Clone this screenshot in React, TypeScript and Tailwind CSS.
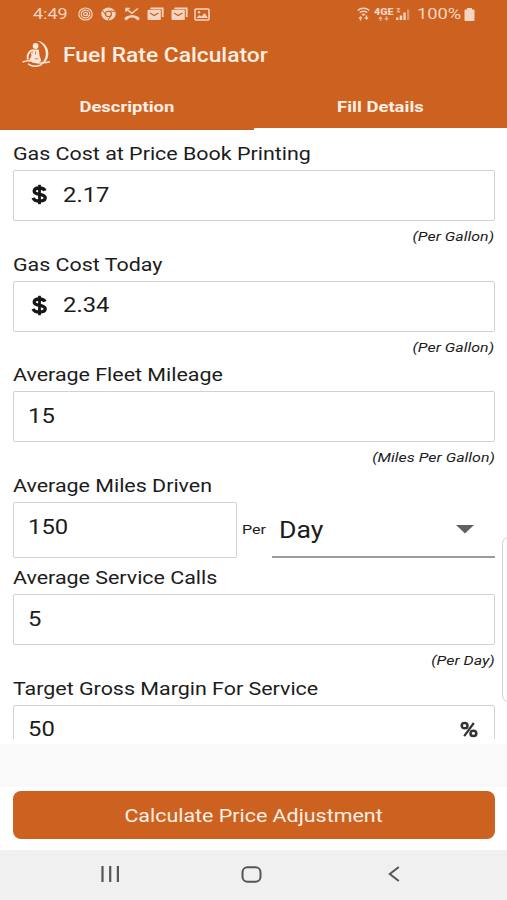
import type { ReactNode } from 'react'

interface FieldProps {
  label: string
  value: string
  prefix?: boolean
  percent?: boolean
  hint?: string
}

// Roboto drawn wider than its default, as on the device's display
function Wide({ children, className = 'origin-left scale-x-[1.19]' }: { children: ReactNode; className?: string }) {
  return <span className={`inline-block whitespace-nowrap ${className}`}>{children}</span>
}

function DollarIcon() {
  return (
    <svg width="17" height="21" viewBox="0 0 17 21" fill="none" stroke="#161616" strokeWidth="3.3">
      <path d="M14 6.6C13 4.4 10.7 4 8.3 4 5.3 4 3.2 5 3.2 7.2c0 4.5 11 2 11 6.6 0 2.3-2.5 3.2-5.6 3.2-3.2 0-5.6-.8-6.6-3.2" />
      <path d="M8.5.8v19.4" strokeWidth="2.8" />
    </svg>
  )
}

function PercentIcon() {
  return (
    <svg width="18" height="17" viewBox="0 0 18 17" fill="none" stroke="#333" strokeWidth="2.5">
      <ellipse cx="4.6" cy="4.7" rx="2.9" ry="2.6" />
      <ellipse cx="13.4" cy="12.4" rx="2.9" ry="2.6" />
      <path d="M13.8 2 4.2 15.2" strokeWidth="2.2" />
    </svg>
  )
}

function LogoIcon() {
  return (
    <svg width="29" height="28" viewBox="0 0 29 28" fill="none" stroke="#fbe6d8">
      <path d="M15 .8C22.500 1.500 26.800 8 26.300 14.500c-.4 5.500-3.500 9-8.300 10.300 3.800-3 5.800-6.500 5.800-11C23.800 8 20.500 3.200 15 .8z" fill="#fbe6d8" stroke="none" />
      <circle cx="13.600" cy="6" r="2.900" fill="#fbe6d8" stroke="none" />
      <path d="M10.800 9.500h6l.7 6 1.800 5.500-3 1.500h-6l-1.800-2.500 1.800-5z" fill="#fbe6d8" stroke="none" />
      <path d="M10.800 10C7 11 4.800 15 5.800 19.500" strokeWidth="2" />
      <path d="M9.500 12.500c1.500 2.500.5 5-1.700 7.500" strokeWidth="1.500" />
      <path d="M.5 22.200c4-2 8.500-1.700 12-.2s8.500 1.300 15.500-.3M6 23.800c4 2.700 9.500 3 14 .5" strokeWidth="1.500" />
      <path d="M13.600 11.500v3M12.800 18.500c1.500.8 2.500.5 3.500-.5" stroke="#cd6220" strokeWidth=".9" />
    </svg>
  )
}

function MailIcon() {
  return (
    <svg width="17" height="14" viewBox="0 0 17 14" fill="none">
      <path d="M3.500 1.300h12.200v8.700" stroke="#f5d4c0" strokeWidth="1.800" />
      <rect x=".5" y="2.800" width="13.300" height="10.200" rx="1" fill="#f5d4c0" />
      <path d="m3 6 4.200 2.600L11.500 6" stroke="#cd6220" strokeWidth="1.300" />
    </svg>
  )
}

function StatusBar() {
  return (
    <div className="flex h-7 items-center text-[#f5d4c0]">
      <div className="ml-[33px] w-[45px] text-[15.500px] leading-7">
        <Wide className="origin-left scale-x-[1.160]">4:49</Wide>
      </div>
      <svg width="15" height="14" viewBox="0 0 15 14" fill="none" stroke="#f5d4c0">
        <ellipse cx="7.500" cy="7" rx="6.700" ry="6" strokeWidth="1.200" />
        <ellipse cx="7.500" cy="7" rx="4.300" ry="3.800" strokeWidth="1.200" />
        <ellipse cx="7.500" cy="7" rx="1.900" ry="1.700" strokeWidth="1.200" />
        <path d="M9.400 5.500c0 3.800 1 4 2 2.700" />
      </svg>
      <svg className="ml-[8px]" width="15" height="14" viewBox="0 0 15 14">
        <ellipse cx="7.500" cy="7" rx="7.200" ry="6.500" fill="#f5d4c0" />
        <ellipse cx="7.500" cy="7" rx="3" ry="2.700" fill="#f5d4c0" stroke="#cd6220" strokeWidth="1.100" />
        <path d="M7.500 4.300h6.300M4.800 8.200 1.800 3.500M10 8.500l-3 4.800" stroke="#cd6220" />
      </svg>
      <svg className="ml-[8px]" width="16" height="14" viewBox="0 0 16 14" fill="none" stroke="#f5d4c0">
        <path d="M2.200 1.800 8 6.300l5.800-4.800M2 4.800V1.500h3.800" strokeWidth="1.500" />
        <path d="M1.800 11.500c3.500-3 9-3 12.400 0" strokeWidth="2.500" />
        <path d="m1 12.300 3-1.800M15 12.300l-3-1.800" strokeWidth="2.800" />
      </svg>
      <div className="ml-[7px] flex gap-[6.500px]">
        <MailIcon />
        <MailIcon />
      </div>
      <svg className="ml-[6px]" width="16" height="13" viewBox="0 0 16 13">
        <rect x="1" y="1" width="14" height="11" rx="1" fill="none" stroke="#f5d4c0" strokeWidth="1.600" />
        <path d="m2.500 10 3-3 2 1.500 3-3.500 3.500 5z" fill="#f5d4c0" />
        <circle cx="5" cy="4.300" r="1.200" fill="#f5d4c0" />
      </svg>

      <svg className="ml-[147px]" width="13" height="14" viewBox="0 0 13 14" fill="none" stroke="#f5d4c0">
        <path d="M.8 3.500c3-3 8.400-3 11.400 0M2.700 5.500c2-1.800 5.600-1.800 7.600 0" strokeWidth="1.500" />
        <path d="M4.300 7.300 6.500 9l2.200-1.700c-1.200-1-3.200-1-4.400 0z" fill="#f5d4c0" stroke="none" />
        <path d="m1.300 11.500 2.200-2.500 2.200 2.500zM7.300 10.500l2.200 2.500 2.200-2.500z" fill="#f5d4c0" stroke="none" />
        <path d="M3.500 11v2.500M9.500 8.500V11" strokeWidth="1.400" />
      </svg>
      <div className="ml-[4px] flex w-[20px] flex-col items-center">
        <span className="scale-x-[1.250] text-[8.500px] leading-[8px] font-black">4GE</span>
        <svg width="11" height="5" viewBox="0 0 11 5" fill="#f5d4c0" opacity=".65">
          <path d="M0 3 2.500 0 5 3H3.200v2H1.800V3zM6 2l2.500 3L11 2H9.200V0H7.800v2z" />
        </svg>
      </div>
      <svg className="ml-[2px]" width="14" height="14" viewBox="0 0 14 14" fill="#f5d4c0">
        <path d="M0 10.500h2.500V13H0zM3.700 8.500h2.500V13H3.700zM7.400 5.500h2.300V13H7.400z" />
        <path d="M11 2.500h2.300V13H11z" opacity=".45" />
        <path d="M.5 1h3.700v1.200H.5zM.5 4.300h3.700v1.200H.5zM1.700 2h1.500v2.500H1.700z" opacity=".7" />
      </svg>
      <div className="ml-[7px] w-[46px] text-[15.500px] leading-7">
        <Wide className="origin-left scale-x-[1.180]">100%</Wide>
      </div>
      <svg className="ml-[1px]" width="11" height="13" viewBox="0 0 11 13" fill="#f5d4c0">
        <path d="M3 0h5v1.500h1.500c.6 0 1 .4 1 1V12c0 .6-.4 1-1 1h-8c-.6 0-1-.4-1-1V2.500c0-.6.4-1 1-1H3z" />
      </svg>
    </div>
  )
}

function Field({ label, value, prefix, percent, hint }: FieldProps) {
  return (
    <div>
      <div className="h-[25px] text-[18px] leading-[25px]">
        <Wide>{label}</Wide>
      </div>
      <div className="mt-[4px] flex h-[51px] items-center rounded-[2px] border-[1.500px] border-[#d2d2d2] pb-[2px]">
        {prefix && (
          <span className="mr-[1px] ml-[17px]">
            <DollarIcon />
          </span>
        )}
        <span className="ml-[14px] flex grow text-[20px] leading-none">
          <Wide>{value}</Wide>
        </span>
        {percent && (
          <span className="mr-[16px]">
            <PercentIcon />
          </span>
        )}
      </div>
      {hint && (
        <div className="flex h-[30.500px] justify-end text-[13.500px] leading-[31px] italic">
          <Wide className="origin-right scale-x-[1.180]">{hint}</Wide>
        </div>
      )}
    </div>
  )
}

export default function App() {
  return (
    <div className="relative flex h-[900px] w-[507px] flex-col overflow-hidden bg-white font-['Roboto',sans-serif] text-[#1c1c1c]">
      <header className="h-[130px] shrink-0 bg-[#cd6220] text-[#fdeee4]">
        <StatusBar />
        <div className="flex h-[54px] items-center">
          <span className="ml-[22px] w-[41px] pb-[3px]">
            <LogoIcon />
          </span>
          <span className="text-[20px] font-medium">
            <Wide className="origin-left scale-x-[1.140]">Fuel Rate Calculator</Wide>
          </span>
        </div>
        <div className="flex h-12 text-center text-[15.500px] leading-[50px] font-bold">
          <div className="w-[254px]">
            <Wide className="origin-center scale-x-[1.190]">Description</Wide>
          </div>
          <div className="flex-1 border-b-2 border-white">
            <Wide className="origin-center scale-x-[1.190]">Fill Details</Wide>
          </div>
        </div>
      </header>

      <main className="h-[609px] shrink-0 overflow-hidden px-[12.500px] pt-[11px]">
        <Field label="Gas Cost at Price Book Printing" value="2.17" prefix hint="(Per Gallon)" />
        <Field label="Gas Cost Today" value="2.34" prefix hint="(Per Gallon)" />
        <Field label="Average Fleet Mileage" value="15" hint="(Miles Per Gallon)" />

        {/* Miles driven with its period selector */}
        <div className="h-[92.500px]">
          <div className="h-[25px] text-[18px] leading-[25px]">
            <Wide>Average Miles Driven</Wide>
          </div>
          <div className="mt-[4px] flex h-[56px]">
            <div className="w-[224px] rounded-[2px] border-[1.500px] border-[#d2d2d2] pt-[12px] pl-[14px] text-[20px] leading-6">
              <Wide>150</Wide>
            </div>
            <div className="w-[35px] pl-[5px] text-[13.500px] leading-[55px]">
              <Wide>Per</Wide>
            </div>
            <div className="flex flex-1 items-center border-b-2 border-[#9b9b9b] pl-[7px] text-[23px]">
              <span className="grow pt-[6px]">
                <Wide className="origin-left scale-x-[1.160]">Day</Wide>
              </span>
              <svg className="mt-[2px] mr-[21px]" width="18" height="9" viewBox="0 0 18 9" fill="#606060">
                <path d="M0 0h18L9 8.500z" />
              </svg>
            </div>
          </div>
        </div>

        <Field label="Average Service Calls" value="5" hint="(Per Day)" />
        <Field label="Target Gross Margin For Service" value="50" percent />
      </main>

      {/* Scroll handle at the screen's edge */}
      <div className="absolute top-[537px] -right-[8px] h-[165px] w-[13px] rounded-lg border border-[#d0d0d0] bg-white" />

      <div className="mt-[5px] h-[43px] shrink-0 bg-[#f9f9f9]" />
      <div className="h-[63px] shrink-0 pt-[4px] pr-[12px] pl-[13px]">
        <button className="h-[48px] w-full rounded-lg bg-[#cd6220] text-[18px] text-[#fdeee4]">
          <Wide className="origin-center scale-x-[1.190]">Calculate Price Adjustment</Wide>
        </button>
      </div>

      <nav className="flex h-[50px] shrink-0 items-center bg-[#f0f0f0] pb-[2px]">
        <svg className="ml-[101px]" width="19" height="16" viewBox="0 0 19 16" stroke="#555" strokeWidth="2.200">
          <path d="M1.500 0v16M9.200 0v16M16.900 0v16" />
        </svg>
        <svg className="ml-[121px]" width="21" height="17" viewBox="0 0 21 17" fill="none" stroke="#555" strokeWidth="2">
          <rect x="1.500" y="1.200" width="18" height="14.600" rx="5" />
        </svg>
        <svg className="ml-[126px]" width="12" height="16" viewBox="0 0 12 16" fill="none" stroke="#555" strokeWidth="2">
          <path d="M10.800 1 1.800 8l9 7" />
        </svg>
      </nav>
    </div>
  )
}
